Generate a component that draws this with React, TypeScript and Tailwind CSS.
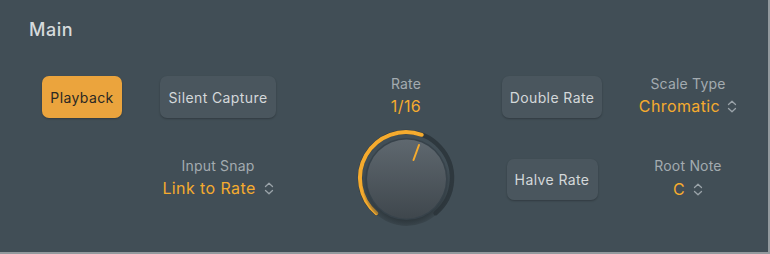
import React from "react";

const Chevron = () => (
  <svg width="10" height="13" viewBox="0 0 10 13" className="shrink-0">
    <path d="M1.5 4.5 L5 1.2 L8.5 4.5" fill="none" stroke="#9aa3a9" strokeWidth="1.3" strokeLinecap="round" strokeLinejoin="round" />
    <path d="M1.5 8.5 L5 11.8 L8.5 8.5" fill="none" stroke="#9aa3a9" strokeWidth="1.3" strokeLinecap="round" strokeLinejoin="round" />
  </svg>
);

const Knob = () => (
  <svg width="110" height="110" viewBox="0 0 110 110">
    <defs>
      <linearGradient id="kb" x1="0" y1="0" x2="0" y2="1">
        <stop offset="0" stopColor="#5f686f" />
        <stop offset="1" stopColor="#3f474d" />
      </linearGradient>
      <radialGradient id="sh" cx="0.5" cy="0.55" r="0.5">
        <stop offset="0.75" stopColor="#2a3338" stopOpacity="0.9" />
        <stop offset="1" stopColor="#2a3338" stopOpacity="0" />
      </radialGradient>
    </defs>
    <path d="M25.43 90.24 A46 46 0 1 1 84.57 90.24" fill="none" stroke="#2e383e" strokeWidth="4.5" strokeLinecap="round" />
    <path d="M25.43 90.24 A46 46 0 0 1 70.73 11.77" fill="none" stroke="#f5ab2e" strokeWidth="4" strokeLinecap="round" />
    <circle cx="55.5" cy="58" r="45" fill="url(#sh)" />
    <circle cx="55.5" cy="56" r="41" fill="#37424a" />
    <circle cx="55.5" cy="56" r="39.5" fill="url(#kb)" />
    <line x1="62.5" y1="37" x2="68" y2="22" stroke="#f5ab2e" strokeWidth="2" strokeLinecap="round" />
  </svg>
);

const Btn = ({ children, w, h = 42, active = false }: { children: React.ReactNode; w: string; h?: number; active?: boolean }) => (
  <div
    className={`${w} flex items-center justify-center rounded-[7px] text-[14px] tracking-[0.4px] shadow-[0_1px_2px_rgba(0,0,0,0.25)] ${
      active ? "bg-[#eba43d] text-[#2a2824]" : "bg-[#4a565e] text-[#d4d8da]"
    }`}
    style={{ height: h }}
  >
    {children}
  </div>
);

export default function App() {
  return (
    <div className="w-[770px] h-[254px] bg-[#939a9e]" style={{ fontFamily: "Inter, 'Noto Sans', sans-serif" }}>
      <div className="w-[768px] h-[252px] bg-[#414e56] flex flex-col">
        <div className="h-[60px] pl-[29px] pt-[19px] text-[18px] leading-[22px] tracking-[0.5px] text-[#d6dadc] font-medium">Main</div>
        <div className="flex items-start">
          <div className="ml-[42px] mt-[16px]">
            <Btn w="w-[80px]" active>Playback</Btn>
          </div>
          <div className="ml-[38px] w-[116px] flex flex-col items-center">
            <div className="mt-[16px]">
              <Btn w="w-[116px]">Silent Capture</Btn>
            </div>
            <div className="mt-[39px] text-[14px] leading-[18px] tracking-[0.2px] text-[#a3abb0]">Input Snap</div>
            <div className="mt-[3px] flex items-center gap-[8px] text-[16px] leading-[20px] tracking-[0.4px] text-[#f5ab2e]">
              <span>Link to Rate</span>
              <Chevron />
            </div>
          </div>
          <div className="ml-[75px] w-[110px] flex flex-col items-center">
            <div className="mt-[15px] text-[14px] leading-[18px] tracking-[0.2px] text-[#a3abb0]">Rate</div>
            <div className="mt-[3px] text-[16px] leading-[20px] tracking-[0.4px] text-[#f5ab2e]">1/16</div>
            <div className="mt-[7px]">
              <Knob />
            </div>
          </div>
          <div className="ml-[41px] w-[100px] flex flex-col items-center">
            <div className="mt-[16px]">
              <Btn w="w-[100px]">Double Rate</Btn>
            </div>
            <div className="mt-[41px]">
              <Btn w="w-[91px]" h={41}>Halve Rate</Btn>
            </div>
          </div>
          <div className="ml-[26px] w-[120px] flex flex-col items-center">
            <div className="mt-[15px] text-[14px] leading-[18px] tracking-[0.2px] text-[#a3abb0]">Scale Type</div>
            <div className="mt-[3px] flex items-center gap-[7px] text-[16px] leading-[20px] tracking-[0.4px] text-[#f5ab2e]">
              <span>Chromatic</span>
              <Chevron />
            </div>
            <div className="mt-[41px] text-[14px] leading-[18px] tracking-[0.2px] text-[#a3abb0]">Root Note</div>
            <div className="mt-[4px] flex items-center gap-[8px] text-[16px] leading-[20px] tracking-[0.4px] text-[#f5ab2e]">
              <span>C</span>
              <Chevron />
            </div>
          </div>
        </div>
      </div>
    </div>
  );
}
